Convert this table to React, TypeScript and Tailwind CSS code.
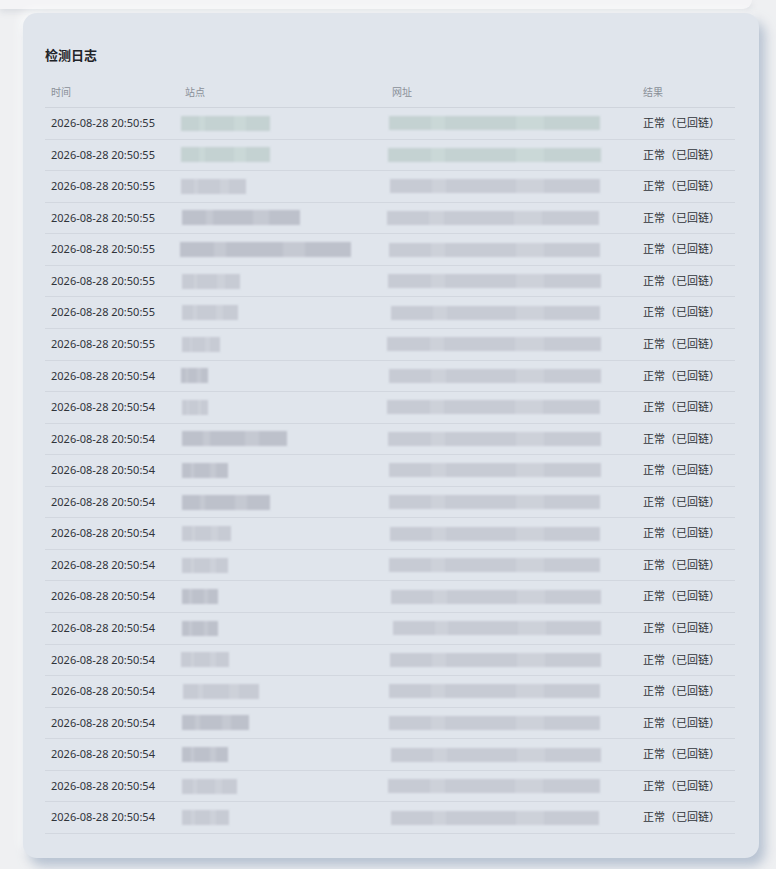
const rows: { time: string; site: number; siteStart: number; url: [number, number]; green?: boolean; dark?: boolean }[] = [
  { time: "2026-08-28 20:50:55", site: 89, siteStart: 181, url: [389, 600], green: true },
  { time: "2026-08-28 20:50:55", site: 89, siteStart: 181, url: [388, 601], green: true },
  { time: "2026-08-28 20:50:55", site: 65, siteStart: 181, url: [390, 600] },
  { time: "2026-08-28 20:50:55", site: 118, siteStart: 182, url: [387, 599], dark: true },
  { time: "2026-08-28 20:50:55", site: 171, siteStart: 180, url: [389, 600], dark: true },
  { time: "2026-08-28 20:50:55", site: 58, siteStart: 182, url: [388, 601] },
  { time: "2026-08-28 20:50:55", site: 56, siteStart: 182, url: [391, 600] },
  { time: "2026-08-28 20:50:55", site: 38, siteStart: 182, url: [387, 601] },
  { time: "2026-08-28 20:50:54", site: 27, siteStart: 181, url: [389, 601], dark: true },
  { time: "2026-08-28 20:50:54", site: 26, siteStart: 182, url: [387, 600] },
  { time: "2026-08-28 20:50:54", site: 105, siteStart: 182, url: [388, 601], dark: true },
  { time: "2026-08-28 20:50:54", site: 46, siteStart: 182, url: [389, 601], dark: true },
  { time: "2026-08-28 20:50:54", site: 88, siteStart: 182, url: [389, 600], dark: true },
  { time: "2026-08-28 20:50:54", site: 49, siteStart: 182, url: [390, 600] },
  { time: "2026-08-28 20:50:54", site: 46, siteStart: 182, url: [389, 600] },
  { time: "2026-08-28 20:50:54", site: 36, siteStart: 182, url: [391, 601], dark: true },
  { time: "2026-08-28 20:50:54", site: 36, siteStart: 182, url: [393, 601], dark: true },
  { time: "2026-08-28 20:50:54", site: 48, siteStart: 181, url: [390, 601] },
  { time: "2026-08-28 20:50:54", site: 76, siteStart: 183, url: [389, 600] },
  { time: "2026-08-28 20:50:54", site: 67, siteStart: 182, url: [389, 600], dark: true },
  { time: "2026-08-28 20:50:54", site: 46, siteStart: 182, url: [391, 601], dark: true },
  { time: "2026-08-28 20:50:54", site: 55, siteStart: 182, url: [388, 600] },
  { time: "2026-08-28 20:50:54", site: 47, siteStart: 182, url: [391, 599] },
];

// soft colour strips standing in for the blurred-out site names and links
function Smudge({ width, offset, green, dark, h }: { width: number; offset: number; green?: boolean; dark?: boolean; h: number }) {
  const base = green ? "bg-[#c4d2d2]" : dark ? "bg-[#bdc1cb]" : "bg-[#c7cbd4]";
  const light = green ? "bg-[#cad8d7]" : dark ? "bg-[#c5c9d2]" : "bg-[#cdd1d9]";
  return (
    <div className="flex blur-[1px]" style={{ width, marginLeft: offset, height: h }}>
      <div className={`h-full flex-[3] ${base}`} />
      <div className={`h-full flex-[1] ${light}`} />
      <div className={`h-full flex-[5] ${base}`} />
      <div className={`h-full flex-[2] ${light}`} />
      <div className={`h-full flex-[4] ${base}`} />
    </div>
  );
}

export default function App() {
  return (
    <main className="min-h-dvh bg-[#eff0f2] font-['Noto_Sans','Noto_Sans_CJK_SC',sans-serif] overflow-hidden">
      <div className="h-[9px] w-[752px] bg-[#f4f4f6] rounded-br-[12px] shadow-[0_3px_6px_rgba(190,195,205,0.45)]" />

      <section className="mt-[4px] ml-[23px] w-[736px] rounded-[14px] bg-[#e0e5ec] px-[22px] pt-[32px] pb-[24px] shadow-[6px_8px_12px_rgba(163,177,198,0.75),-4px_-4px_10px_rgba(255,255,255,0.6)]">
        <h2 className="text-[13px] leading-[20px] font-bold text-[#1f2328]">检测日志</h2>

        <div className="mt-[13px] w-[690px]">
          <div className="flex h-[30px] items-center border-b border-[#cfd4dc] text-[10px] text-[#8a9099]">
            <div className="w-[134px] pl-[6px]">时间</div>
            <div className="w-[207px] pl-[6px]">站点</div>
            <div className="w-[251px] pl-[6px]">网址</div>
            <div className="flex-1 pl-[6px]">结果</div>
          </div>

          {rows.map((r, i) => (
            <div key={i} className="flex h-[31.57px] items-center border-b border-[#d2d7df] text-[11px] text-[#30343a]">
              <div className="w-[134px] pl-[6px] whitespace-nowrap">{r.time}</div>
              <div className="w-[207px]">
                <Smudge width={r.site} offset={r.siteStart - 179} green={r.green} dark={r.dark} h={15} />
              </div>
              <div className="w-[251px]">
                <Smudge width={r.url[1] - r.url[0]} offset={r.url[0] - 386} green={r.green} h={14} />
              </div>
              <div className="flex-1 pl-[6px] whitespace-nowrap">正常（已回链）</div>
            </div>
          ))}
        </div>
      </section>
    </main>
  );
}
